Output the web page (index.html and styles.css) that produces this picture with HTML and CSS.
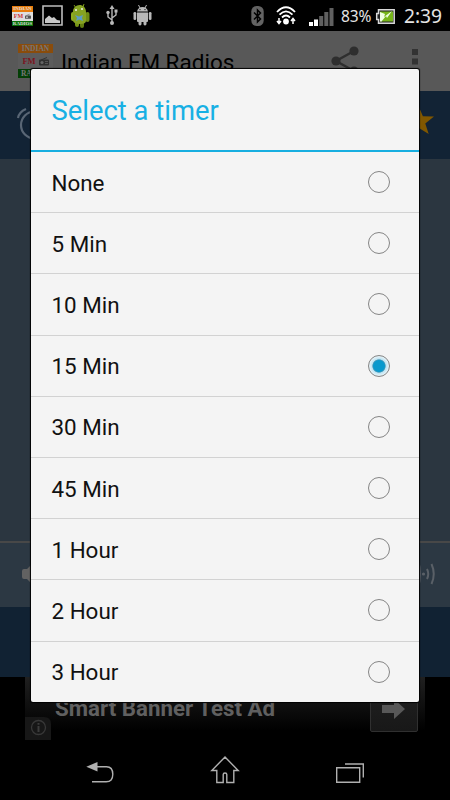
FILE: index.html
```html
<!DOCTYPE html>
<html lang="en">
<head>
<meta charset="utf-8">
<title>Indian FM Radios</title>
<link rel="stylesheet" href="styles.css">
</head>
<body>
<div class="screen">
  <header class="status">
    <div class="mini-logo"><span>INDIAN</span><span>FM<svg viewBox="0 0 9 7"><path d="M2 2L7 0" stroke="#777"/><rect y="2" width="9" height="5" rx="1" fill="#555"/><circle cx="3" cy="4.5" r="1.3" fill="#ccc"/></svg></span><span>RADIOS</span></div>
    <svg class="i-picture" viewBox="0 0 21 21"><path d="M1 1H20V20H1Z" fill="none" stroke="#bdbdbd" stroke-width="1.600"/><path d="M3 18V14Q5 12 7 10.500L10 13 12 12 15 15 18 15.500V18Z" fill="#c8c8c8"/></svg>
    <svg class="i-droid" viewBox="0 0 19 25"><path d="M3 2L5 5M13 1L12 4" stroke="#7b9818"/><rect x="14.500" y="9" width="4" height="10" rx="2" fill="#6f8b15"/><rect x="0" y="9" width="4" height="9" rx="2" fill="#8fae20"/><rect x="4" y="18" width="4" height="6" rx="2" fill="#789517"/><rect x="9" y="18" width="4" height="7" rx="2" fill="#647e12"/><path d="M2 10C1 0 15-1 15 9V18Q15 21 9 21T2 18Z" fill="#86a322"/><path d="M4 12L8 13.500 12 12 11 15 12 18 8 16.500 5 18 6 15Z" fill="#5d9dc6"/><circle cx="5" cy="7" r="1" fill="#eee"/><circle cx="11" cy="6" r="1" fill="#eee"/></svg>
    <svg class="i-usb" viewBox="0 0 12 21"><g fill="none" stroke="#b8b8b8" stroke-width="1.400"><path d="M6 3V18M6 15L2 12V8M6 13L10 10V6"/></g><g fill="#b8b8b8"><path d="M3.500 4L6 0 8.500 4Z"/><circle cx="6" cy="18" r="2"/><circle cx="2" cy="7.500" r="1.700"/><path d="M8.500 4.500h3v3h-3z"/></g></svg>
    <svg class="i-android" viewBox="0 0 19 21"><g fill="#b8b8b8"><path d="M4 6.500Q5 2 9.500 2T15 6.500Z"/><path d="M4 7.500H15V16Q15 17 14 17H5Q4 17 4 16Z"/><rect x=".5" y="7" width="2.700" height="8" rx="1.300"/><rect x="15.800" y="7" width="2.700" height="8" rx="1.300"/><rect x="5.500" y="14" width="3" height="6.500" rx="1.400"/><rect x="10.500" y="14" width="3" height="6.500" rx="1.400"/></g><path d="M5.500 0L7 3M13.500 0L12 3" stroke="#b8b8b8"/><circle cx="7" cy="4.600" r=".6"/><circle cx="12" cy="4.600" r=".6"/></svg>
    <svg class="i-bt" viewBox="0 0 13 20"><rect x=".3" width="12.400" height="20" rx="5.500" fill="#636363"/><path d="M3 6.500L9.500 13 6.500 16V4L9.500 7 3 13.500" fill="none" stroke="#000" stroke-width="1.500"/></svg>
    <svg class="i-wifi" viewBox="0 0 20 19"><g fill="none" stroke="#fff" stroke-width="1.800"><path d="M1 6Q10-3.500 19 6M3.500 8.700Q10 2 16.500 8.700M6 11.500Q10 7.500 14 11.500"/></g><circle cx="10" cy="15.500" r="2.900" fill="#fff"/><path d="M3 12V17M1 15L3 17.500 5 15M17 18V13M15 15L17 12.500 19 15" fill="none" stroke="#fff" stroke-width="1.500"/></svg>
    <svg class="i-signal" viewBox="0 0 25 18"><path d="M0 14h4v4H0zM5 11.500h4V18H5z" fill="#fff"/><path d="M10.200 8h4v10h-4zM15.300 4h4v14h-4zM20.500 0h4v18h-4z" fill="#606060"/></svg>
    <span class="percent">83%</span>
    <svg class="i-battery" viewBox="0 0 19 15"><path d="M2.500.8H18.200V14.200H2.500V10.500H.7V4.500H2.500Z" fill="#222" stroke="#d8d8d8" stroke-width="1.500"/><path d="M4 2.500H17V12.500H4Z" fill="#77b51a"/><path d="M4 12L4 3 9 5 8 8 16 2 11 9 10 7 5 13Z" fill="#efffe2"/></svg>
    <time class="clock">2:39</time>
  </header>

  <div class="appbar">
    <div class="logo"><span>INDIAN</span><span>FM<svg viewBox="0 0 10 9"><path d="M2 3L8 .5" stroke="#333"/><rect y="2.500" width="10" height="6" rx="1" fill="#303030"/><circle cx="3" cy="5.500" r="1.600" fill="#666"/><path d="M6 4.500h3M6 6.500h3" stroke="#666" stroke-width=".7"/></svg></span><span>RADIOS</span></div>
    <h1>Indian FM Radios</h1>
    <svg class="share" viewBox="0 0 28 30"><path d="M23 5L5 15 23 25" fill="none" stroke="#2e2e2e" stroke-width="2.400"/><g fill="#2e2e2e"><circle cx="23" cy="5" r="4.600"/><circle cx="5" cy="15" r="4.600"/><circle cx="23" cy="25" r="4.600"/></g></svg>
    <svg class="more" viewBox="0 0 6 26"><path d="M0 0h6v6H0zM0 9.500h6v6H0zM0 19h6v6H0z" fill="#333"/></svg>
  </div>

  <div class="toolbar">
    <svg class="alarm" viewBox="0 0 36 36"><g fill="none" stroke="#596675" stroke-width="2.200"><circle cx="17.500" cy="20" r="13.500"/><path d="M1 13Q2 7 9 4M25 4Q32 7 33 13"/></g></svg>
    <svg class="star" viewBox="0 0 32 32"><path d="M16 1L20.500 11.500 32 11.800 23 19 26.500 30 16 23.500 5.500 30 9 19 0 11.800 11.500 11.500Z" fill="#805700"/></svg>
  </div>
  <div class="station"></div>
  <div class="volume">
    <svg class="speaker" viewBox="0 0 16 24"><path d="M0 9Q0 7 2 7H5L12 0V24L5 17H2Q0 17 0 15Z" fill="#626262"/></svg>
    <svg class="waves" viewBox="0 0 24 30"><g fill="none" stroke="#5a6067" stroke-width="2"><path d="M6 1Q10 15 6 29"/><path d="M15 10Q17.500 15 15 20M19.500 5Q24 15 19.500 25" /></g><circle cx="11.500" cy="15" r="1.600" fill="#5a6067"/></svg>
  </div>
  <div class="controls"></div>
  <div class="ad">
    <div class="banner">
      <svg class="info" viewBox="0 0 26 23"><path d="M0 0H19Q26 0 26 7V23H0Z" fill="#171717"/><circle cx="13.500" cy="10.500" r="7" fill="none" stroke="#383838" stroke-width="1.300"/><path d="M13.500 9v6M13.500 6v1.800" stroke="#3c3c3c" stroke-width="2"/></svg>
      <span class="ad-text">Smart Banner Test Ad</span>
      <div class="go"><svg viewBox="0 0 24 20"><path d="M0 6H12V0L23 10 12 20V14H0Z" fill="#585858"/></svg></div>
    </div>
  </div>
  <nav class="navbar">
    <svg viewBox="0 0 28 28"><path d="M10 10.700H20.500Q26.800 10.700 26.800 18.300T20 25.800H6" fill="none" stroke="#b0b0b0" stroke-width="1.400"/><path d="M.3 10.700L11.500 6V15.500Z" fill="#b0b0b0"/></svg>
    <svg viewBox="0 0 28 28"><path d="M14 1L27.200 14.500H22.800V26.500H15.800V18.500Q15.800 17 14 17T12.200 18.500V26.500H5.800V14.500H.8Z" fill="none" stroke="#b0b0b0" stroke-width="1.400"/></svg>
    <svg viewBox="0 0 28 28"><path d="M.7 11.700H23.700V26.300H.7ZM9 8H27.300V21.500" fill="none" stroke="#b0b0b0" stroke-width="1.400"/></svg>
  </nav>

  <section class="dialog">
    <h2>Select a timer</h2>
    <ul>
      <li>None<i class="radio"></i></li>
      <li>5 Min<i class="radio"></i></li>
      <li>10 Min<i class="radio"></i></li>
      <li>15 Min<i class="radio on"></i></li>
      <li>30 Min<i class="radio"></i></li>
      <li>45 Min<i class="radio"></i></li>
      <li>1 Hour<i class="radio"></i></li>
      <li>2 Hour<i class="radio"></i></li>
      <li>3 Hour<i class="radio"></i></li>
    </ul>
  </section>
</div>
</body>
</html>
```
FILE: styles.css
```css
* { box-sizing: border-box; }
body { margin: 0; background: #000; font-family: Roboto, "Liberation Sans", sans-serif; }
svg { display: block; flex: none; overflow: visible; }
.screen { position: relative; width: 450px; height: 800px; overflow: hidden; display: flex; flex-direction: column; }

.status { height: 31px; flex: none; display: flex; align-items: center; padding-left: 12px; color: #e4e4e4; font-family: "Noto Sans", sans-serif; white-space: nowrap; }
.mini-logo { width: 21px; height: 20px; display: grid; grid-template-rows: 6px 9px 5px; font: bold 5px/6px "Liberation Serif", serif; color: #ddd; text-align: center; overflow: hidden; }
.mini-logo span:nth-child(1) { background: #e87c0c; }
.mini-logo span:nth-child(2) { background: #dedede; color: #c33; font-size: 6px; line-height: 9px; display: flex; align-items: center; justify-content: center; gap: 2px; }
.mini-logo span:nth-child(3) { background: #087008; line-height: 5px; }
.mini-logo svg { width: 6px; height: 5px; }
.i-picture { width: 21px; height: 21px; margin-left: 9px; }
.i-droid { width: 19px; height: 25px; margin-left: 8px; }
.i-usb { width: 12px; height: 21px; margin-left: 16px; }
.i-android { width: 19px; height: 21px; margin-left: 15px; }
.i-bt { width: 13px; height: 20px; margin-left: 99px; }
.i-wifi { width: 20px; height: 19px; margin-left: 12px; }
.i-signal { width: 25px; height: 18px; margin-left: 13px; margin-top: 2px; }
.percent { font-size: 15.500px; width: 31px; margin-left: 7px; letter-spacing: -.1px; line-height: 31px; padding-top: 2px; }
.i-battery { width: 19px; height: 15px; margin-left: 4px; margin-top: 1px; }
.clock { font-size: 19.200px; margin-left: 9px; line-height: 31px; }

.appbar { height: 60px; flex: none; background: #585858; display: flex; padding: 13px 0 0 18px; }
.logo { width: 35px; height: 34px; display: grid; grid-template-rows: 9px 16px 9px; font: bold 7.500px/9px "Liberation Serif", serif; color: #777; text-align: center; overflow: hidden; }
.logo span:nth-child(1) { background: #8a4c0b; }
.logo span:nth-child(2) { background: #5c5c5c; color: #7c1420; font-size: 8.500px; display: flex; align-items: center; justify-content: center; gap: 3px; }
.logo span:nth-child(3) { background: #043f06; }
.logo svg { width: 10px; height: 9px; }
.appbar h1 { margin: 3px 0 0 8px; width: 265px; font-size: 22.500px; line-height: 30px; font-weight: 400; color: #000; }
.share { width: 28px; height: 30px; margin: 2px 0 0 5px; }
.more { width: 6px; height: 26px; margin: 5px 0 0 53px; }

.toolbar { height: 68px; flex: none; background: #122335; display: flex; justify-content: space-between; padding: 14px 16px 0 17px; }
.alarm { width: 36px; height: 36px; }
.star { width: 31px; height: 31px; }
.station { height: 382px; flex: none; background: #2b3640; }
.volume { height: 66px; flex: none; background: #2c3843; border-top: 2px solid #484848; display: flex; justify-content: space-between; padding: 16px 14px 0 22px; }
.speaker { width: 16px; height: 24px; margin-top: 3px; }
.waves { width: 24px; height: 30px; }
.controls { height: 70px; flex: none; background: #112233; }
.ad { height: 63px; flex: none; padding: 0 25px; }
.banner { height: 63px; background: linear-gradient(#202020, #000 85%); display: grid; grid-template-columns: 26px 1fr 48px; padding-right: 7px; }
.info { width: 26px; height: 23px; align-self: end; }
.ad-text { margin: 16px 0 0 4px; font-size: 22.300px; line-height: 30px; font-weight: 700; color: #606060; white-space: nowrap; }
.go { height: 55px; background: linear-gradient(#222, #181818); border: 1px solid #303030; border-radius: 2px; padding: 21px 0 0 11px; }
.go svg { width: 24px; height: 20px; }
.navbar { flex: 1; display: flex; justify-content: space-between; padding: 16px 86px 0; }
.navbar svg { width: 28px; height: 28px; }

.dialog { position: absolute; left: 31px; top: 69px; width: 388px; height: 633px; background: #f4f4f4; border-radius: 2px; box-shadow: 0 0 1px 1px #000; overflow: hidden; }
.dialog h2 { margin: 0; height: 83px; padding-left: 20.500px; border-bottom: 2px solid #17aee0; font-size: 27.400px; line-height: 85px; font-weight: 400; color: #18b0e4; }
.dialog ul { list-style: none; margin: 0; padding: 0; display: grid; grid-auto-rows: 61.200px; }
.dialog li { display: flex; align-items: center; justify-content: space-between; padding: 1px 29px 0 20.500px; font-size: 22.400px; color: #111; border-bottom: 1px solid #d2d2d2; }
.radio { width: 22px; height: 22px; border: 1.300px solid #858585; border-radius: 50%; margin-top: -1px; }
.on { background: radial-gradient(circle, #0899cd 0 5.500px, #4f9cba 6.300px, #bde4f3 7px, #e4f1f6 9.500px); }
```
